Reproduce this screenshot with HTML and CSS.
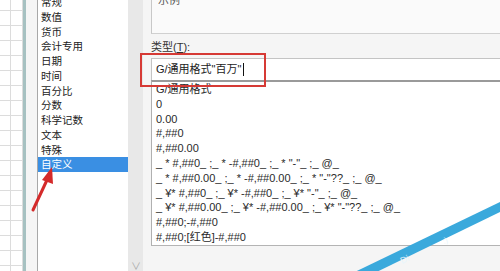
FILE: index.html
```html
<!DOCTYPE html>
<html lang="zh-CN">
<head>
  <meta charset="UTF-8" />
  <title>设置单元格格式 - 自定义</title>
  <link rel="stylesheet" href="styles.css">
</head>
<body>
  <div class="screen">
    <!-- worksheet edge behind the dialog -->
    <div class="sheet"></div>

    <div class="dialog">
      <!-- category list -->
      <div class="category">
        <ul class="cat-list">
          <li>常规</li>
          <li>数值</li>
          <li>货币</li>
          <li>会计专用</li>
          <li>日期</li>
          <li>时间</li>
          <li>百分比</li>
          <li>分数</li>
          <li>科学记数</li>
          <li>文本</li>
          <li>特殊</li>
          <li class="selected">自定义</li>
        </ul>
        <div class="scrollbar"><span class="arrow">&#8744;</span></div>
      </div>

      <div class="format">
        <div class="sample"><span class="sample-text">示例</span></div>
        <div class="type-label">类型(<u>T</u>):</div>
        <div class="type-input">G/通用格式"百万"<span class="caret"></span></div>
        <ul class="type-list">
          <li>G/通用格式</li>
          <li>0</li>
          <li>0.00</li>
          <li>#,##0</li>
          <li>#,##0.00</li>
          <li>_ * #,##0_ ;_ * -#,##0_ ;_ * "-"_ ;_ @_</li>
          <li>_ * #,##0.00_ ;_ * -#,##0.00_ ;_ * "-"??_ ;_ @_</li>
          <li>_ ¥* #,##0_ ;_ ¥* -#,##0_ ;_ ¥* "-"_ ;_ @_</li>
          <li>_ ¥* #,##0.00_ ;_ ¥* -#,##0.00_ ;_ ¥* "-"??_ ;_ @_</li>
          <li>#,##0;-#,##0</li>
          <li>#,##0;[红色]-#,##0</li>
        </ul>
      </div>
    </div>
  </div>

  <!-- annotations drawn over the screenshot -->
  <div class="highlight"></div>

  <svg class="arrow-mark" width="60" height="60" viewBox="0 0 60 60">
    <line x1="12" y1="54" x2="26" y2="24" stroke="#d42a2a" stroke-width="3" stroke-linecap="round" />
    <polygon points="31,11 21,24 32,28" fill="#d42a2a" />
  </svg>

  <svg class="watermark" width="160" height="80" viewBox="0 0 160 80">
    <polygon points="160,0 160,10 16,80 -6,80" fill="#3aa9dc" />
    <text x="62" y="62" fill="#e8f6fc" font-size="9" font-family="Liberation Sans, sans-serif" transform="rotate(-25 62 62)">Di</text>
    <text x="104" y="42" fill="#e8f6fc" font-size="8" font-family="Liberation Sans, sans-serif" transform="rotate(-25 104 42)">:)</text>
  </svg>
</body>
</html>
```

FILE: styles.css
```css
body {
  margin: 0;
  width: 500px;
  height: 271px;
  overflow: hidden;
  background: #f5f5f5;
  font-family: 'Liberation Sans', 'Noto Sans CJK SC', sans-serif;
  color: #222;
  position: relative;
}

ul {
  list-style: none;
  margin: 0;
  padding: 0;
}

.screen {
  display: flex;
  height: 271px;
}

.sheet {
  width: 23px;
  flex-shrink: 0;
  background-color: #fff;
  background-image:
    linear-gradient(#dcdcdc 1px, transparent 1px),
    linear-gradient(90deg, #dcdcdc 1px, transparent 1px);
  background-size: 12px 15px;
  background-position: -2px 10px;
  border-right: 3px solid #a6c1c1;
}

.dialog {
  display: flex;
  flex: 1;
  padding-left: 11px;
  min-width: 0;
}

/* left: category list */
.category {
  display: flex;
  border-left: 1px solid #a8a8a8;
  flex-shrink: 0;
}

.cat-list {
  width: 90px;
  background: #fff;
  margin-top: -5px;
  font-size: 10.5px;
}

.cat-list li {
  height: 14.75px;
  line-height: 14.75px;
  padding-left: 3px;
}

.cat-list li.selected {
  background: #3a8fe3;
  color: #fff;
}

.scrollbar {
  width: 15px;
  background: #e8e8e8;
  position: relative;
}

.scrollbar .arrow {
  position: absolute;
  left: 3px;
  bottom: -2px;
  font-size: 10px;
  color: #aaa;
}

/* right: format type */
.format {
  margin-left: 8px;
  flex: 1;
  min-width: 0;
}

.sample {
  height: 33px;
  border-left: 1px solid #c8c8c8;
  border-bottom: 1px solid #d0d0d0;
  background: #fafafa;
  overflow: hidden;
}

.sample-text {
  display: block;
  margin: -6px 0 0 6px;
  font-size: 11px;
  line-height: 12px;
  color: #555;
}

.type-label {
  margin-top: 6px;
  height: 14px;
  line-height: 14px;
  font-size: 11px;
  color: #333;
  margin-bottom: 4px;
}

.type-input {
  height: 21px;
  line-height: 21px;
  border-top: 1px solid #c4c4c4;
  border-left: 1px solid #c4c4c4;
  background: #fff;
  padding-left: 4px;
  font-size: 11px;
  display: flex;
  align-items: center;
}

.caret {
  display: inline-block;
  width: 1px;
  height: 13px;
  background: #111;
  margin-left: 2px;
}

.type-list {
  border-top: 2px solid #9a9a9a;
  border-left: 1px solid #b0b0b0;
  border-bottom: 1px solid #b4b4b4;
  background: #fff;
  padding-left: 4px;
  font-size: 11px;
  color: #2a2a2a;
  margin-right: -40px;
}

.type-list li {
  height: 14.8px;
  line-height: 14.8px;
  white-space: pre;
}

/* annotations */
.highlight {
  position: absolute;
  left: 140px;
  top: 53px;
  width: 122px;
  height: 30px;
  border: 2px solid #d63a35;
}

.arrow-mark {
  position: absolute;
  left: 21px;
  top: 156px;
}

.watermark {
  position: absolute;
  left: 340px;
  top: 202px;
  overflow: visible;
}
```
